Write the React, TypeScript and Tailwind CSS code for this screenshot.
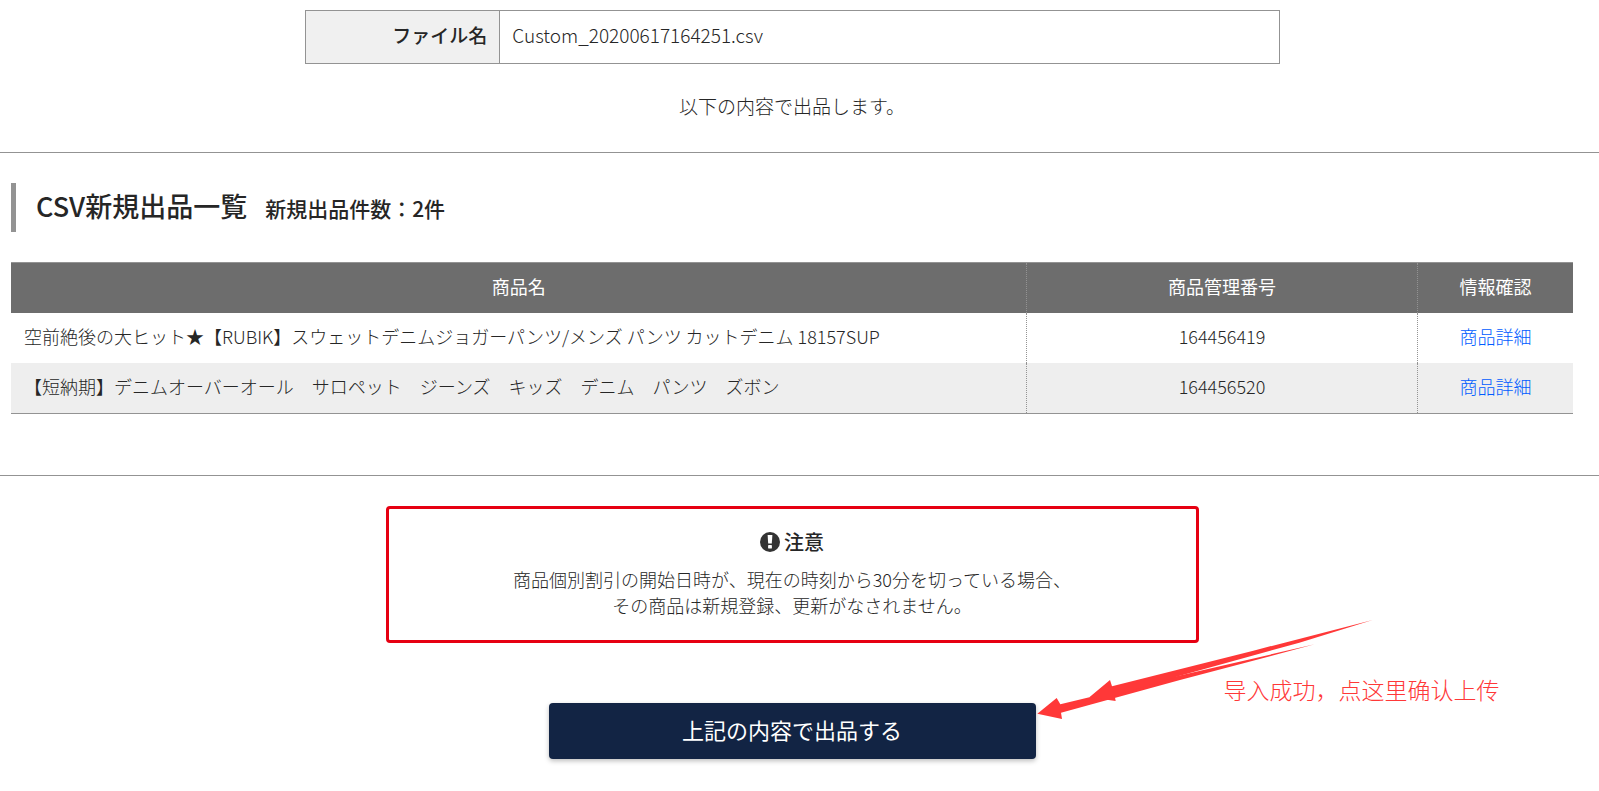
import React from "react";

type Item = { name: string; code: string };

const items: Item[] = [
  {
    name: "空前絶後の大ヒット★【RUBIK】スウェットデニムジョガーパンツ/メンズ パンツ カットデニム 18157SUP",
    code: "164456419",
  },
  {
    name: "【短納期】デニムオーバーオール　サロペット　ジーンズ　キッズ　デニム　パンツ　ズボン",
    code: "164456520",
  },
];

function FileInfo() {
  return (
    <table className="mx-auto w-[975px] max-w-full table-fixed border-collapse border border-[#939393]">
      <tbody>
        <tr>
          <th
            scope="row"
            className="w-1/5 border border-[#939393] bg-[#f0f0f0] px-3 pt-[10px] pb-[14px] text-right text-[19px] leading-[28px] font-medium"
          >
            ファイル名
          </th>
          <td className="border border-[#939393] px-3 pt-[10px] pb-[14px] text-[19px] leading-[28px]">
            Custom_20200617164251.csv
          </td>
        </tr>
      </tbody>
    </table>
  );
}

function ItemTable() {
  const cell = "px-[13px] pt-[10px] pb-[14px]";
  const divided = "border-l border-dotted border-l-[#939393]";
  return (
    <table className="w-full table-fixed border-separate border-spacing-0 border-y border-[#939393] text-[18px] leading-[26px]">
      <thead>
        <tr className="bg-[#6d6d6d] text-white">
          <th scope="col" className={`w-[65%] font-normal ${cell}`}>
            商品名
          </th>
          <th scope="col" className={`w-[25%] font-normal ${cell} ${divided}`}>
            商品管理番号
          </th>
          <th scope="col" className={`w-[10%] font-normal ${cell} ${divided}`}>
            情報確認
          </th>
        </tr>
      </thead>
      <tbody>
        {items.map((item) => (
          <tr key={item.code} className="even:bg-[#eeeeee]">
            <td className={cell}>{item.name}</td>
            <td className={`text-center ${cell} ${divided}`}>{item.code}</td>
            <td className={`text-center ${cell} ${divided}`}>
              <a href="#detail" className="text-[#005cff]">
                商品詳細
              </a>
            </td>
          </tr>
        ))}
      </tbody>
    </table>
  );
}

function Notice() {
  return (
    <section className="mx-auto w-[813px] max-w-full rounded border-[3px] border-[#e60012] px-5 pt-5 pb-[22px] text-center">
      <h2 className="flex items-center justify-center gap-1 text-[20px] leading-[26px] font-medium">
        <svg viewBox="0 0 20 20" className="size-5" aria-hidden="true">
          <circle cx="10" cy="10" r="10" fill="#333" />
          <path d="M7.6 3h4.8l-.6 8.6H8.2z" fill="#fff" />
          <rect x="8.1" y="13" width="3.8" height="3.4" rx=".4" fill="#fff" />
        </svg>
        注意
      </h2>
      <p className="mt-[11px] text-[18px] leading-[26px]">
        商品個別割引の開始日時が、現在の時刻から30分を切っている場合、
        <br />
        その商品は新規登録、更新がなされません。
      </p>
    </section>
  );
}

function SubmitArea() {
  return (
    <div className="relative mx-auto mt-[60px] w-[487px] max-w-full">
      <button
        type="button"
        className="block h-14 w-full rounded bg-[#122444] pb-1 text-[22px] font-normal text-white shadow-[0_2px_5px_rgba(0,0,0,0.26)]"
      >
        上記の内容で出品する
      </button>
      <svg
        viewBox="48 54 1020 309"
        className="absolute -top-[85px] left-full h-[103px] w-[340px]"
        fill="#ff3838"
        aria-hidden="true"
      >
        <path d="M52 341 110 294 121 313 476 227 884 133 480 240 123 338 126 357Z" />
        <path d="M208 292 270 240 276 259 700 152 1058 60 838 128 480 227 284 287 287 303Z" />
      </svg>
      <p className="absolute -top-[30px] left-full ml-[188px] font-['Noto_Sans_CJK_SC','Noto_Sans',sans-serif] text-[23px] leading-[32px] font-light whitespace-nowrap text-[#ff3838]">
        导入成功，点这里确认上传
      </p>
    </div>
  );
}

export default function App() {
  return (
    <main className="overflow-x-hidden bg-white pt-[10px] pb-8 font-['Noto_Sans_CJK_JP','Noto_Sans',sans-serif] font-light text-[#262626]">
      <div className="border-b border-[#939393] pr-[26px] pb-8 pl-[11px]">
        <FileInfo />
        <p className="mt-7 text-center text-[19px] leading-[28px]">以下の内容で出品します。</p>
      </div>
      <div className="border-b border-[#939393] pt-[30px] pr-[26px] pb-[61px] pl-[11px]">
        <h1 className="mb-[30px] flex h-[49px] items-baseline gap-[18px] border-l-[5px] border-[#939393] pl-5 text-[27px] leading-[46px] font-medium">
          CSV新規出品一覧
          <span className="text-[21px]">新規出品件数：2件</span>
        </h1>
        <ItemTable />
      </div>
      <div className="pt-[30px] pr-[26px] pl-[11px]">
        <Notice />
        <SubmitArea />
      </div>
    </main>
  );
}
